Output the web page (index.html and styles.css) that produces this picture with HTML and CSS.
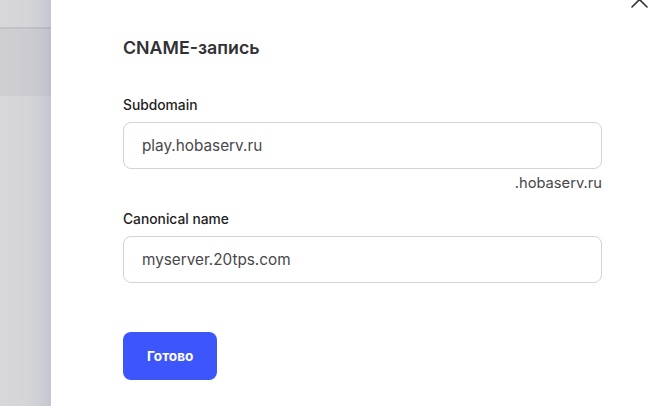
FILE: index.html
```html
<!DOCTYPE html>
<html lang="ru">
<head>
<meta charset="utf-8">
<title>CNAME-запись</title>
<link rel="stylesheet" href="styles.css">
</head>
<body>
<div class="page">
  <div class="backdrop">
    <div class="bd-top"></div>
    <div class="bd-band"></div>
    <div class="bd-rest"></div>
  </div>
  <div class="panel">
    <button class="close" aria-label="Закрыть">
      <svg width="19" height="19" viewBox="0 0 19 19"><path d="M2 2 L17 17 M17 2 L2 17" stroke="#2e2e33" stroke-width="1.6" stroke-linecap="round" fill="none"/></svg>
    </button>
    <h1 class="title">CNAME-запись</h1>
    <div class="field">
      <label class="label">Subdomain</label>
      <div class="input">play.hobaserv.ru</div>
      <div class="hint">.hobaserv.ru</div>
    </div>
    <div class="field second">
      <label class="label">Canonical name</label>
      <div class="input">myserver.20tps.com</div>
    </div>
    <div class="actions">
      <button class="btn">Готово</button>
    </div>
  </div>
</div>
</body>
</html>
```
FILE: styles.css
```css
html, body {
  margin: 0;
  padding: 0;
  height: 100%;
  overflow: hidden;
}
body {
  font-family: Inter, "Noto Sans", sans-serif;
  background: #fff;
}
.page {
  display: flex;
  height: 406px;
}
.backdrop {
  width: 51px;
  flex: none;
  display: flex;
  flex-direction: column;
  background: linear-gradient(to right, #d7d7d9 0px, #d5d5d8 28px, #cdced5 42px, #c3c6d3 51px);
}
.bd-top {
  height: 27px;
}
.bd-band {
  height: 67px;
  border-top: 2px solid rgba(40, 44, 80, 0.07);
  background: rgba(30, 30, 60, 0.04);
}
.bd-rest {
  flex: 1;
}
.panel {
  flex: 1;
  position: relative;
  padding: 36px 48px 0 72px;
  display: flex;
  flex-direction: column;
}
.close {
  position: absolute;
  left: 579px;
  top: -10px;
  width: 19px;
  height: 19px;
  padding: 0;
  border: 0;
  background: none;
}
.close svg { display: block; }
.title {
  margin: 0;
  font-size: 17.8px;
  line-height: 24px;
  font-weight: 600;
  color: #313136;
}
.field {
  display: flex;
  flex-direction: column;
  margin-top: 37px;
}
.field.second {
  margin-top: 19px;
}
.label {
  font-size: 13.8px;
  line-height: 16px;
  font-weight: 500;
  color: #1e1e22;
  margin-bottom: 9px;
}
.input {
  box-sizing: border-box;
  height: 47px;
  border: 1px solid #d3d3d8;
  border-radius: 8px;
  padding: 0 18px;
  display: flex;
  align-items: center;
  font-size: 15.3px;
  color: #47474c;
}
.hint {
  align-self: flex-end;
  margin-top: 5px;
  font-size: 14.7px;
  line-height: 18px;
  color: #47474c;
}
.actions {
  margin-top: 49px;
}
.btn {
  height: 48px;
  padding: 0 24px;
  border: 0;
  border-radius: 8px;
  background: #3c56fc;
  color: #fff;
  font-family: Inter, "Noto Sans", sans-serif;
  font-size: 13.6px;
  font-weight: 700;
}
```
